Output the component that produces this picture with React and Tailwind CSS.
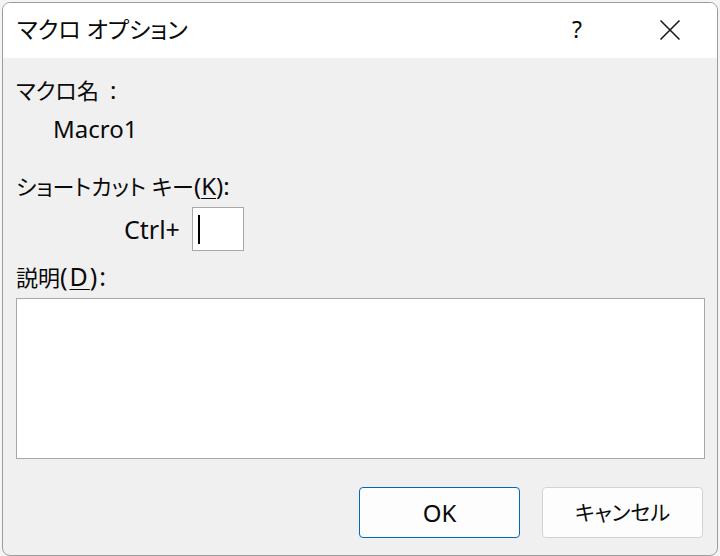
import React from "react";

const font = {
  fontFamily: '"Noto Sans", "Noto Sans CJK JP", sans-serif',
};

export default function App() {
  return (
    <div
      className="w-[720px] h-[556px] bg-[#f4f4f4] overflow-hidden text-[#0a0a0a] [font-feature-settings:'palt']"
      style={font}
    >
      <div className="ml-[2px] mt-[2px] w-[716px] h-[554px] rounded-[8px] border border-[#9c9c9c] bg-[#f0f0f0] flex flex-col overflow-hidden">
        {/* title bar */}
        <div className="h-[55px] bg-white flex items-center pl-[14px] pr-[36px]">
          <div className="flex-1 text-[23px] leading-none pb-[2px]">
            マクロ オプション
          </div>
          <div className="text-[23px] leading-none mr-[77px] pb-[2px]">?</div>
          <svg width="22" height="22" viewBox="0 0 22 22" className="mb-[2px]">
            <path d="M1.5 1.5 L20.5 20.5 M20.5 1.5 L1.5 20.5" stroke="#1a1a1a" strokeWidth="1.6" fill="none" />
          </svg>
        </div>

        {/* body */}
        <div className="flex-1 flex flex-col pl-[13px] pt-[17px]">
          <div className="h-[30px] leading-[30px] text-[22px]">
            マクロ名<span className="ml-[11px] text-[24px]">:</span>
          </div>
          <div className="h-[30px] leading-[30px] text-[24px] mt-[9px] pl-[37px]">Macro1</div>
          <div className="h-[30px] leading-[30px] text-[22px] mt-[27px]">
            ショートカット キー
            <span className="text-[24px]">
              (<span className="underline underline-offset-[3px] decoration-1">K</span>):
            </span>
          </div>
          <div className="flex items-center mt-[6px] pl-[108px]">
            <span className="text-[25px] leading-[30px]">Ctrl+</span>
            <div className="ml-[12px] w-[52px] h-[44px] bg-white border border-[#a8a8a8] flex items-center pl-[5px]">
              <div className="w-[2px] h-[29px] bg-black" />
            </div>
          </div>
          <div className="h-[30px] leading-[30px] text-[22px] mt-[10px]">
            説明
            <span className="text-[25px] tracking-[2px]">
              (<span className="underline underline-offset-[3px] decoration-1">D</span>):
            </span>
          </div>
          <div className="mt-[7px] w-[689px] h-[161px] bg-white border border-[#a8a8a8]" />
          <div className="flex justify-end gap-[22px] mt-[28px] pr-[14px]">
            <button className="w-[161px] h-[51px] rounded-[4px] bg-[#fdfdfd] border border-[#0067c0] text-[24px] leading-none">
              OK
            </button>
            <button className="w-[161px] h-[51px] rounded-[4px] bg-[#fdfdfd] border border-[#d3d3d3] text-[21px] leading-none">
              キャンセル
            </button>
          </div>
        </div>
      </div>
    </div>
  );
}
